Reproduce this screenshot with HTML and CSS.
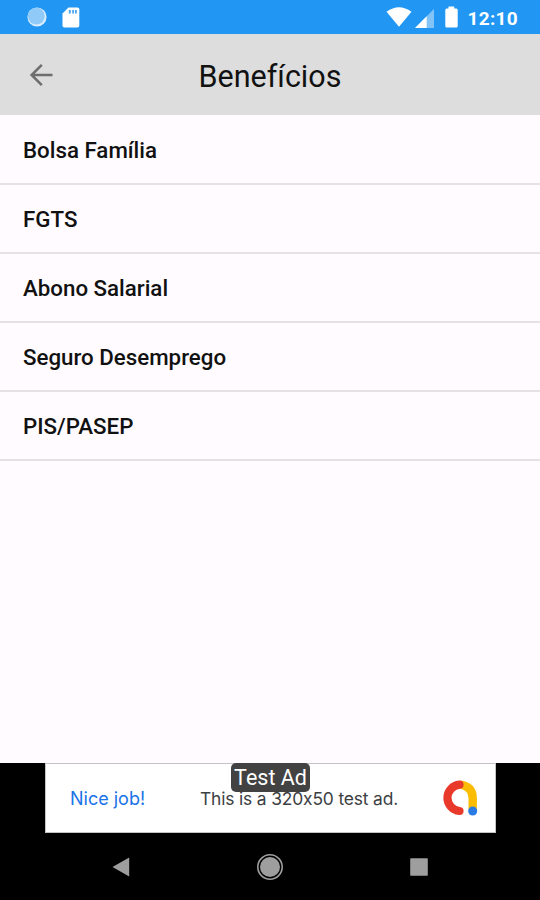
FILE: index.html
```html
<!DOCTYPE html>
<html lang="pt-BR">
<head>
  <meta charset="UTF-8">
  <meta name="viewport" content="width=device-width, initial-scale=1">
  <title>Benefícios</title>
  <link rel="stylesheet" href="styles.css">
</head>
<body>
  <div class="status-bar">
    <svg class="icon-sync" width="20" height="20" viewBox="0 0 20 20">
      <circle cx="10" cy="10" r="9.6" fill="#d9edff"/>
      <circle cx="9.3" cy="9.2" r="8.4" fill="#8fcaf9"/>
    </svg>
    <svg class="icon-sd" width="18" height="21" viewBox="0 0 18 21">
      <path d="M6.5 0.5H15.5Q17.3 0.5 17.3 2.3V18.7Q17.3 20.5 15.5 20.5H2.3Q0.5 20.5 0.5 18.7V6.5Z" fill="#fff"/>
      <path d="M6.8 3H8.8V6.5H6.8ZM10.2 3H12V6.5H10.2ZM13 3H14.8V6.5H13Z" fill="#4ba7f3"/>
    </svg>
    <div class="status-right">
      <svg class="icon-wifi" width="26" height="20" viewBox="0 0 26 20">
        <path d="M0.5 4.8Q13 -4.2 25.5 4.8L13 19.8Z" fill="#fff"/>
      </svg>
      <svg class="icon-signal" width="19" height="19" viewBox="0 0 19 19">
        <path d="M19 0V19H0Z" fill="#82c3f8"/>
        <path d="M11.7 7.3V19H0Z" fill="#fff"/>
      </svg>
      <svg class="icon-battery" width="13" height="22" viewBox="0 0 13 22">
        <path d="M3.5 2.5V0.5H9.2V2.5H11.3Q12.7 2.5 12.7 4V20Q12.7 21.5 11.3 21.5H1.7Q0.3 21.5 0.3 20V4Q0.3 2.5 1.7 2.5Z" fill="#fff"/>
      </svg>
      <span class="clock">12:10</span>
    </div>
  </div>

  <header class="header">
    <svg class="back" width="24" height="24" viewBox="0 0 24 24">
      <path d="M12.8 1.8L2.6 12L12.8 22.2M2.6 12H23.5" fill="none" stroke="#6e6e6e" stroke-width="2.5"/>
    </svg>
    <h1>Benefícios</h1>
  </header>

  <ul class="lista">
    <li>Bolsa Família</li>
    <li>FGTS</li>
    <li>Abono Salarial</li>
    <li>Seguro Desemprego</li>
    <li>PIS/PASEP</li>
  </ul>

  <div class="ad-bar">
    <div class="ad">
      <span class="ad-label">Test Ad</span>
      <span class="ad-title">Nice job!</span>
      <span class="ad-text">This is a 320x50 test ad.</span>
      <svg class="ad-logo" width="36" height="36" viewBox="0 0 36 36">
        <path d="M18 4.7Q30.7 6.5 30.7 18V30" fill="none" stroke="#fbbc04" stroke-width="8.4"/>
        <path d="M17.5 4.7A13.2 13.2 0 0 0 17.5 31" fill="none" stroke="#e8392b" stroke-width="8.2" stroke-linecap="round"/>
        <circle cx="30.7" cy="31" r="4.5" fill="#2a7be4"/>
      </svg>
    </div>
  </div>

  <nav class="nav-bar">
    <svg width="28" height="28" viewBox="0 0 28 28">
      <path d="M5.5 14L22.2 4.5V23.5Z" fill="#9e9e9e"/>
    </svg>
    <svg width="28" height="28" viewBox="0 0 28 28">
      <circle cx="14" cy="14" r="12.2" fill="none" stroke="#9e9e9e" stroke-width="1.6"/>
      <circle cx="14" cy="14" r="10" fill="#9e9e9e"/>
    </svg>
    <svg width="28" height="28" viewBox="0 0 28 28">
      <rect x="5.2" y="5.2" width="17.6" height="17.6" rx="0.8" fill="#9e9e9e"/>
    </svg>
  </nav>
</body>
</html>
```
FILE: styles.css
```css
* {
  box-sizing: border-box;
}
body {
  margin: 0;
  height: 900px;
  display: flex;
  flex-direction: column;
  font-family: Roboto, sans-serif;
  background-color: #fffbff;
  color: #111;
}
svg {
  display: block;
  flex-shrink: 0;
}
.status-bar {
  height: 34px;
  display: flex;
  align-items: center;
  padding: 0 22px 0 27px;
  background-color: #2196f3;
}
.icon-sd {
  margin-left: 15px;
}
.status-right {
  display: flex;
  align-items: center;
  margin-left: auto;
}
.icon-signal {
  margin: 2px 11px 0 3px;
}
.clock {
  margin: 3px 0 0 10px;
  font-size: 19px;
  font-weight: 700;
  line-height: 24px;
  letter-spacing: 0.3px;
  color: #fff;
}
.header {
  height: 81px;
  display: grid;
  grid-template-columns: 60px 1fr 60px;
  align-items: center;
  background-color: #dddddd;
}
.back {
  margin-left: 29px;
}
h1 {
  margin: 5px 0 0;
  font-size: 30.5px;
  font-weight: 400;
  line-height: 36px;
  text-align: center;
}
.lista {
  flex: 1;
  margin: 0;
  padding: 1px 0 0;
  list-style: none;
}
.lista li {
  height: 69px;
  padding: 1px 23px 0;
  border-bottom: 2px solid #e5e2e6;
  font-size: 22.3px;
  font-weight: 500;
  line-height: 67px;
}
.ad-bar {
  height: 70px;
  padding: 0 44px 0 45px;
  background-color: #000;
}
.ad {
  position: relative;
  height: 70px;
  display: flex;
  align-items: center;
  padding: 0 17px 0 24px;
  background-color: #fff;
  border: 1px solid #c4c4c4;
  font-family: Inter, sans-serif;
  font-size: 17.4px;
  font-feature-settings: "calt" 0;
}
.ad-title {
  width: 130px;
  font-size: 18px;
  color: #1a73e8;
}
.ad-text {
  color: #3c4043;
  letter-spacing: -0.15px;
  white-space: nowrap;
}
.ad-logo {
  margin-left: auto;
}
.ad-label {
  position: absolute;
  top: -1px;
  left: 185px;
  width: 79px;
  height: 29px;
  border-radius: 5px;
  background-color: #424242;
  color: #fff;
  font-family: Roboto, sans-serif;
  font-size: 21.5px;
  line-height: 30px;
  text-align: center;
}
.nav-bar {
  height: 67px;
  display: flex;
  justify-content: space-between;
  align-items: center;
  padding: 0 107px;
  background-color: #000;
}
```
